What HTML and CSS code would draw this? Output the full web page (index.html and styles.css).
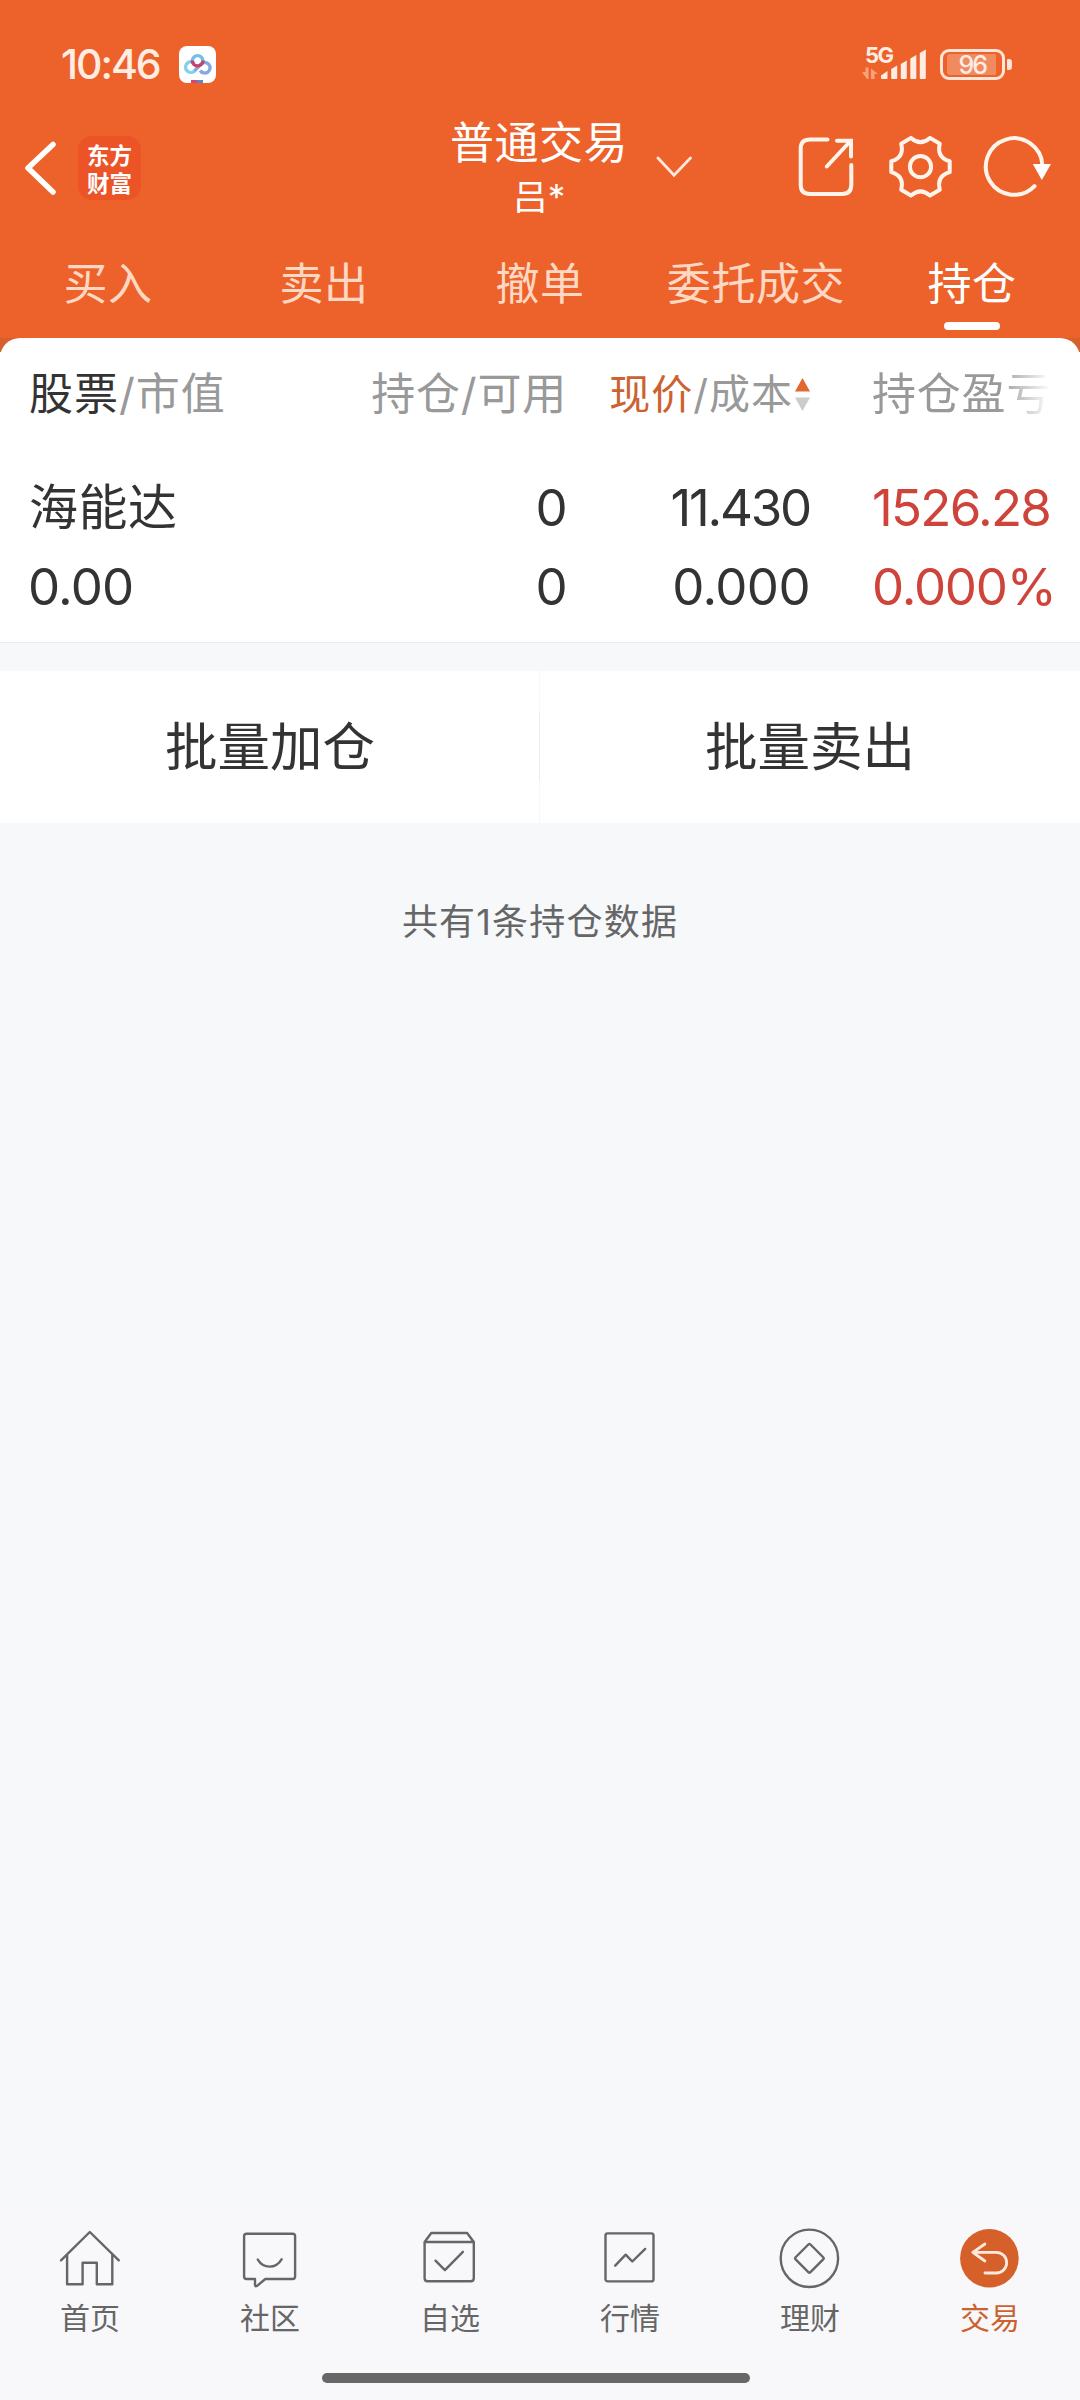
FILE: index.html
```html
<!DOCTYPE html>
<html lang="zh-CN">
<head>
<meta charset="utf-8">
<title>持仓</title>
<link rel="stylesheet" href="styles.css">
</head>
<body>
<header class="top">
  <div class="status">
    <span class="time">10:46</span>
    <svg class="app-badge" width="37" height="37" viewBox="0 0 37 37" fill="none" stroke-width="3.4">
      <rect width="37" height="37" rx="8" fill="#fff"/>
      <path d="M15.500 25a5.300 5.300 0 1 1 .2-7.600" stroke="#7fd3ea"/>
      <path d="M15.400 25L22 18a5.300 5.300 0 1 1-.8 6.500" stroke="#84a9e2"/>
      <path d="M13.200 15a5.400 5.400 0 1 1 10.800 0" stroke="#73bfe6"/>
      <path d="M13.200 14.500a5.400 5.400 0 0 0 10.800 0" stroke="#c9406f"/>
      <path d="M12 35.500h6" stroke="#cf4a70" stroke-width="3"/>
      <path d="M18 35.500h6" stroke="#5a85cf" stroke-width="3"/>
    </svg>
    <div class="signal">
      <span class="net">5G</span>
      <svg width="66" height="34" viewBox="0 0 66 34">
        <path d="M0 25h3.500v-4.500h3V32H5zM9 21.500l7 5.500h-3.500v5H9z" fill="#f7a27d"/>
        <g fill="#ffece3">
          <path d="M19 28.500l6.500-4.500v7q0 1-1 1H20q-1 0-1-1z"/>
          <path d="M29.200 22l6-3.500V31q0 1-1 1h-4q-1 0-1-1z"/>
          <path d="M38.800 17l6-3.500V31q0 1-1 1h-4q-1 0-1-1z"/>
          <path d="M48.300 11.500l6-3.500V31q0 1-1 1h-4q-1 0-1-1z"/>
          <path d="M57.800 6l6-3.500V31q0 1-1 1h-4q-1 0-1-1z"/>
        </g>
      </svg>
    </div>
    <div class="battery"><span class="level">96</span></div>
    <i class="nub"></i>
  </div>

  <div class="bar">
    <div class="bar-left">
      <svg width="32" height="56" viewBox="0 0 32 56" fill="none" stroke="#fff" stroke-width="5.500" stroke-linecap="round" stroke-linejoin="round"><path d="M28 4.500L3 28l25 24"/></svg>
      <div class="brand">东方财富</div>
    </div>
    <div class="title">
      <div class="title-main">普通交易</div>
      <div class="title-sub">吕*</div>
    </div>
    <svg class="drop" width="36" height="22" viewBox="0 0 36 22" fill="none" stroke="#ffe9df" stroke-width="2.800" stroke-linecap="round"><path d="M2 2l16 17.300L34.500 2"/></svg>
    <div class="actions">
      <svg width="72" height="72" viewBox="0 0 72 72" fill="none" stroke="#fff4ec" stroke-width="4" stroke-linecap="round">
        <path d="M36.500 7.500H19q-9.300 0-9.300 9.300v35.900Q9.700 62 19 62h32q9.300 0 9.300-9.300V33"/>
        <path d="M46 8.700h14V24.500M59.500 9L35.800 34.500"/>
      </svg>
      <svg width="72" height="72" viewBox="-36.500 -34.700 72 72" fill="none" stroke="#fff4ec" stroke-width="4" stroke-linejoin="round">
        <circle r="10.600"/>
        <path d="M-9.500-28.800Q0-20.500 9.500-28.800L19.300-23C17-14 20.500-8 29.200-5.500V5.500C20.500 8 17 14 19.300 23L9.500 28.800Q0 20.500-9.500 28.800L-19.300 23C-17 14-20.500 8-29.200 5.500V-5.500C-20.500-8-17-14-19.300-23Z"/>
      </svg>
      <svg width="76" height="72" viewBox="0 0 76 72" fill="none" stroke="#fff4ec" stroke-width="4" stroke-linecap="round">
        <path d="M56.500 54.200A28.300 28.300 0 1 1 64.400 33"/>
        <path d="M54.800 32H73l-9.200 16z" fill="#fff" stroke="none"/>
      </svg>
    </div>
  </div>

  <nav class="tabs">
    <span class="tab">买入</span>
    <span class="tab">卖出</span>
    <span class="tab">撤单</span>
    <span class="tab">委托成交</span>
    <span class="tab on">持仓</span>
  </nav>
</header>

<main>
  <div class="sheet-wrap">
    <section class="sheet">
      <div class="row head">
        <div><b>股票</b>/市值</div>
        <div class="num">持仓/可用</div>
        <div class="num sort"><span><em>现价</em>/成本</span>
          <svg width="15" height="34" viewBox="0 0 15 34"><path d="M7.500 0L15 13.500H0z" fill="#e2682f"/><path d="M0 19.500h15L7.500 33z" fill="#ccc"/></svg>
        </div>
        <div class="fade">持仓盈亏</div>
      </div>
      <div class="row first">
        <div class="name">海能达</div>
        <div class="num">0</div>
        <div class="num price">11.430</div>
        <div class="gain a">1526.28</div>
      </div>
      <div class="row">
        <div class="worth">0.00</div>
        <div class="num">0</div>
        <div class="num">0.000</div>
        <div class="gain b">0.000%</div>
      </div>
    </section>
  </div>

  <section class="batch">
    <button>批量加仓</button>
    <i class="split"></i>
    <button>批量卖出</button>
  </section>
  <p class="count">共有1条持仓数据</p>
</main>

<footer>
  <nav class="dock">
    <a class="item">
      <svg viewBox="0 0 64 64"><path d="M3 34.300L31.800 6 60.800 34.300M9.100 29v29.300h15.500V36.800h14.200v21.500h15.500V29"/></svg>
      <span>首页</span>
    </a>
    <a class="item">
      <svg viewBox="0 0 64 64"><path d="M8.600 7.700h46q2.500 0 2.500 2.500v40.300q0 2.500-2.500 2.500H27.300l-8.200 6.800q-2.100 1.200-2.100-1V53H8.600q-2.500 0-2.500-2.500V10.200q0-2.500 2.500-2.500z"/><path d="M19.800 33.600q4.200 7 11.800 7t12-7.300"/></svg>
      <span>社区</span>
    </a>
    <a class="item">
      <svg viewBox="0 0 64 64"><path d="M6.600 16h49.200v36.300q0 3-3 3H9.600q-3 0-3-3zL13.300 7h35.800l6.700 9M17.500 34.700l9.400 9.400 18-18.300"/></svg>
      <span>自选</span>
    </a>
    <a class="item">
      <svg viewBox="0 0 64 64"><rect x="7.500" y="7.400" width="48" height="48" rx="2.200"/><path d="M17.200 39.700l10.500-11 6.600 6.800 12.900-12.600"/></svg>
      <span>行情</span>
    </a>
    <a class="item">
      <svg viewBox="0 0 64 64"><circle cx="31.400" cy="32.300" r="28.700"/><rect x="20.900" y="21.800" width="21" height="21" rx="1.500" transform="rotate(45 31.400 32.300)"/></svg>
      <span>理财</span>
    </a>
    <a class="item on">
      <svg viewBox="0 0 64 64"><circle cx="31.400" cy="32.300" r="29.300" class="disc"/><path class="back" d="M26.900 18L14.800 26.300 26.900 35M14.800 26.300h23.500a10.350 10.350 0 0 1 0 20.700H27"/></svg>
      <span>交易</span>
    </a>
  </nav>
  <div class="home-bar"></div>
</footer>
</body>
</html>
```
FILE: styles.css
```css
* { box-sizing: border-box; }
body {
  margin: 0;
  width: 1080px;
  height: 2400px;
  display: flex;
  flex-direction: column;
  background: #f7f8fa;
  color: #333;
  font-family: Inter, "Noto Sans CJK SC", sans-serif;
  overflow: hidden;
}
svg { display: block; flex: none; }
.top {
  height: 338px;
  background: #ed622b;
  color: #fff;
  display: flex;
  flex-direction: column;
}

/* status bar */
.status {
  height: 128px;
  padding: 0 68px 0 61px;
  display: flex;
  align-items: center;
  color: #ffece3;
}
.time { width: 118px; font-size: 41px; font-weight: 500; letter-spacing: -2px; white-space: nowrap; }
.signal { margin-left: auto; width: 66px; position: relative; }
.net { position: absolute; left: 3px; top: -4px; font-size: 22px; line-height: 24px; font-weight: 700; letter-spacing: -1.500px; }
.battery {
  margin-left: 12px;
  width: 65px;
  height: 31px;
  padding: 2px 6px 2px 4px;
  border: 3px solid #ffe4d8;
  border-radius: 9px;
}
.level {
  display: block;
  height: 21px;
  border-radius: 3px 0 0 3px;
  background: #f28a60;
  font-size: 25px;
  line-height: 22px;
  font-weight: 500;
  letter-spacing: -2px;
  text-align: right;
  padding-right: 10px;
}
.nub { width: 5px; height: 11px; margin-left: 2px; border-radius: 1px 3px 3px 1px; background: #ffe4d8; }

/* title bar */
.bar { height: 104px; display: flex; }
.bar-left { display: flex; align-items: center; gap: 21px; padding: 0 0 25px 25px; width: 451px; }
.brand {
  width: 63px;
  height: 64px;
  padding: 4px 9px;
  border-radius: 14px;
  background: #ec5327;
  font: 700 22.500px/28px "Noto Sans CJK SC", sans-serif;
  line-break: anywhere;
}
.title { width: 176px; display: flex; flex-direction: column; align-items: center; }
.title-main { font-size: 44px; line-height: 60px; margin-top: -15px; white-space: nowrap; letter-spacing: .5px; }
.title-sub { font-size: 35px; line-height: 48px; }
.drop { margin: 28px 0 0 29px; }
.actions { margin: 4px 26px 0 auto; display: flex; gap: 22px; }
.actions svg:first-child { margin-right: -1px; }

/* tabs */
.tabs { height: 106px; display: flex; }
.tab {
  width: 216px;
  text-align: center;
  font-size: 44px;
  line-height: 105px;
  letter-spacing: .6px;
  color: #ffd8c4;
}
.tab.on { color: #fff; display: flex; flex-direction: column; align-items: center; }
.tab.on::after { content: ""; width: 56px; height: 8px; margin-top: -15px; border-radius: 4px; background: #fff; }

/* holdings table */
.sheet-wrap { background: linear-gradient(#d5602c 14px, #fff 14px); }
.sheet {
  height: 305px;
  background: #fff;
  border-radius: 20px 20px 0 0;
  border-bottom: 1px solid #ebecee;
}
.row {
  height: 79px;
  padding-left: 29px;
  display: grid;
  grid-template-columns: 320px 218px 243px 200px;
  align-items: center;
  font-size: 51px;
  line-height: 79px;
  white-space: nowrap;
}
.num { text-align: right; letter-spacing: -.6px; }
.price { letter-spacing: -2.200px; }
.head { height: 112px; line-height: 113px; font-size: 44px; color: #999; letter-spacing: 1px; }
.head .num { letter-spacing: .8px; }
.head b { font-weight: 400; color: #333; }
.head .sort { display: flex; justify-content: flex-end; align-items: center; gap: 2px; font-size: 41px; letter-spacing: 1px; }
.sort em { font-style: normal; color: #cc6230; }
.first { margin-top: 18px; }
.name { font-size: 49px; letter-spacing: .5px; }
.worth { margin-left: -1px; letter-spacing: -.8px; }
.fade, .gain { padding-left: 62px; }
.fade {
  width: 241px;
  letter-spacing: .8px;
  -webkit-mask-image: linear-gradient(90deg, #000 188px, transparent 241px);
  mask-image: linear-gradient(90deg, #000 188px, transparent 241px);
}
.gain { color: #ce433a; }
.a { letter-spacing: -1.700px; }
.b { letter-spacing: -1.200px; }

/* batch buttons */
.batch { height: 152px; margin-top: 28px; background: #fff; display: flex; align-items: center; }
.batch button {
  flex: 1;
  padding: 0;
  border: 0;
  background: none;
  color: #333;
  font: 400 52.500px/151px Inter, "Noto Sans CJK SC", sans-serif;
}
.split { width: 1px; height: 152px; margin-left: -1px; background: linear-gradient(#f8f8f8 42px, #ebebeb 42px 109px, #f8f8f8 109px); }
.count { margin: 74px 0 0; text-align: center; font-size: 36px; line-height: 50px; letter-spacing: 1.200px; color: #666; }

/* bottom navigation */
footer { margin-top: auto; height: 200px; background: #f8f8fb; }
.dock { display: flex; height: 173px; padding-top: 26px; }
.item { width: 180px; display: flex; flex-direction: column; align-items: center; color: #666; font-size: 30px; line-height: 44px; }
.item svg { width: 64px; height: 64px; margin-bottom: 6px; fill: none; stroke: #666; stroke-width: 2.400; stroke-linecap: round; stroke-linejoin: round; }
.item.on { color: #cc6230; }
.item .disc { fill: #d66029; stroke: none; }
.item .back { stroke: #ffe9df; stroke-width: 2.800; }
.home-bar { width: 428px; height: 10px; margin: 0 auto; border-radius: 5px; background: #676767; position: relative; left: -4px; }
```
